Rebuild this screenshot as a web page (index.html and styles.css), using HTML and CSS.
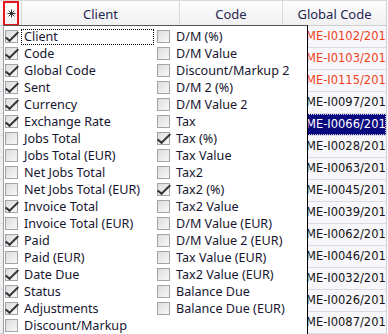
FILE: index.html
```html
<!DOCTYPE html>
<html>
<head>
    <title>Invoices grid - column chooser</title>
    <meta charset="utf-8" />
    <link rel="stylesheet" href="styles.css">
</head>
<body>
    <div class="grid">
        <div class="head">
            <div class="hcell sel">
                <span class="star">
                    <svg width="9" height="9" viewBox="0 0 9 9">
                        <path d="M4.5 0.5v8M0.5 4.5h8M1.7 1.7l5.6 5.6M7.3 1.7l-5.6 5.6" stroke="#333" stroke-width="1" fill="none"/>
                    </svg>
                </span>
            </div>
            <div class="hcell">Client</div>
            <div class="hcell">Code</div>
            <div class="hcell">Global Code</div>
        </div>
        <div class="row late"><div class="cell sel"></div><div class="cell"></div><div class="cell"></div><div class="cell code">ME-I0102/2017</div></div>
        <div class="row late"><div class="cell sel"></div><div class="cell"></div><div class="cell"></div><div class="cell code">ME-I0103/2017</div></div>
        <div class="row late"><div class="cell sel"></div><div class="cell"></div><div class="cell"></div><div class="cell code">ME-I0115/2017</div></div>
        <div class="row"><div class="cell sel"></div><div class="cell"></div><div class="cell"></div><div class="cell code">ME-I0097/2017</div></div>
        <div class="row current"><div class="cell sel"></div><div class="cell"></div><div class="cell"></div><div class="cell code">ME-I0066/2016</div></div>
        <div class="row"><div class="cell sel"></div><div class="cell"></div><div class="cell"></div><div class="cell code">ME-I0028/2017</div></div>
        <div class="row"><div class="cell sel"></div><div class="cell"></div><div class="cell"></div><div class="cell code">ME-I0063/2016</div></div>
        <div class="row"><div class="cell sel"></div><div class="cell"></div><div class="cell"></div><div class="cell code">ME-I0045/2016</div></div>
        <div class="row"><div class="cell sel"></div><div class="cell"></div><div class="cell"></div><div class="cell code">ME-I0039/2017</div></div>
        <div class="row"><div class="cell sel"></div><div class="cell"></div><div class="cell"></div><div class="cell code">ME-I0062/2016</div></div>
        <div class="row"><div class="cell sel"></div><div class="cell"></div><div class="cell"></div><div class="cell code">ME-I0046/2017</div></div>
        <div class="row"><div class="cell sel"></div><div class="cell"></div><div class="cell"></div><div class="cell code">ME-I0032/2017</div></div>
        <div class="row"><div class="cell sel"></div><div class="cell"></div><div class="cell"></div><div class="cell code">ME-I0026/2017</div></div>
        <div class="row"><div class="cell sel"></div><div class="cell"></div><div class="cell"></div><div class="cell code">ME-I0087/2017</div></div>
    </div>

    <div class="chooser">
        <div class="col">
            <div class="item on"><i class="box"></i><span class="label focus">Client</span></div>
            <div class="item on"><i class="box"></i><span class="label">Code</span></div>
            <div class="item on"><i class="box"></i><span class="label">Global Code</span></div>
            <div class="item on"><i class="box"></i><span class="label">Sent</span></div>
            <div class="item on"><i class="box"></i><span class="label">Currency</span></div>
            <div class="item on"><i class="box"></i><span class="label">Exchange Rate</span></div>
            <div class="item"><i class="box"></i><span class="label">Jobs Total</span></div>
            <div class="item"><i class="box"></i><span class="label">Jobs Total (EUR)</span></div>
            <div class="item"><i class="box"></i><span class="label">Net Jobs Total</span></div>
            <div class="item"><i class="box"></i><span class="label">Net Jobs Total (EUR)</span></div>
            <div class="item on"><i class="box"></i><span class="label">Invoice Total</span></div>
            <div class="item"><i class="box"></i><span class="label">Invoice Total (EUR)</span></div>
            <div class="item on"><i class="box"></i><span class="label">Paid</span></div>
            <div class="item"><i class="box"></i><span class="label">Paid (EUR)</span></div>
            <div class="item on"><i class="box"></i><span class="label">Date Due</span></div>
            <div class="item on"><i class="box"></i><span class="label">Status</span></div>
            <div class="item on"><i class="box"></i><span class="label">Adjustments</span></div>
            <div class="item"><i class="box"></i><span class="label">Discount/Markup</span></div>
        </div>
        <div class="col">
            <div class="item"><i class="box"></i><span class="label">D/M (%)</span></div>
            <div class="item"><i class="box"></i><span class="label">D/M Value</span></div>
            <div class="item"><i class="box"></i><span class="label">Discount/Markup 2</span></div>
            <div class="item"><i class="box"></i><span class="label">D/M 2 (%)</span></div>
            <div class="item"><i class="box"></i><span class="label">D/M Value 2</span></div>
            <div class="item"><i class="box"></i><span class="label">Tax</span></div>
            <div class="item on"><i class="box"></i><span class="label">Tax (%)</span></div>
            <div class="item"><i class="box"></i><span class="label">Tax Value</span></div>
            <div class="item"><i class="box"></i><span class="label">Tax2</span></div>
            <div class="item on"><i class="box"></i><span class="label">Tax2 (%)</span></div>
            <div class="item"><i class="box"></i><span class="label">Tax2 Value</span></div>
            <div class="item"><i class="box"></i><span class="label">D/M Value (EUR)</span></div>
            <div class="item"><i class="box"></i><span class="label">D/M Value 2 (EUR)</span></div>
            <div class="item"><i class="box"></i><span class="label">Tax Value (EUR)</span></div>
            <div class="item"><i class="box"></i><span class="label">Tax2 Value (EUR)</span></div>
            <div class="item"><i class="box"></i><span class="label">Balance Due</span></div>
            <div class="item"><i class="box"></i><span class="label">Balance Due (EUR)</span></div>
        </div>
    </div>
</body>
</html>
```

FILE: styles.css
```css
body {
    margin: 0px;
    background: #ffffff;
    font-family: "Noto Sans", "DejaVu Sans", sans-serif;
    overflow: hidden;
}

.grid {
    width: 386px;
    border-right: 1px solid #cfcfd6;
}

.head,
.row {
    display: grid;
    grid-template-columns: 22px 158px 103px 103px;
}

.head {
    height: 26px;
    background: linear-gradient(#fdfdfd, #f0f0f0);
    border-top: 1px solid #d8d8d8;
    border-bottom: 1px solid #cfcfcf;
    box-sizing: border-box;
}

.hcell {
    border-right: 1px solid #d8d8d8;
    font-size: 13px;
    color: #1f2550;
    display: flex;
    align-items: center;
    justify-content: center;
}

.hcell:last-child {
    border-right: none;
}

.hcell.sel {
    justify-content: flex-start;
}

.star {
    width: 12px;
    height: 21px;
    margin-left: 3px;
    border: 2px solid #e8141b;
    display: flex;
    align-items: center;
    justify-content: center;
}

.row {
    height: 22px;
    background: #f7f6fb;
    border-bottom: 1px solid #dcdbe4;
    box-sizing: border-box;
}

.cell {
    border-right: 1px solid #dcdbe4;
    overflow: hidden;
    white-space: nowrap;
}

.cell.sel {
    background: #efeff2;
}

.cell:last-child {
    border-right: none;
}

.code {
    font-family: "DejaVu Sans", sans-serif;
    font-size: 11.5px;
    line-height: 21px;
    padding-left: 23px;
    color: #141414;
}

.row.late .code {
    color: #f2421a;
}

.row.current .code {
    background: #0a0a80;
    color: #ffffff;
    outline: 1px dotted #c8c8e8;
    outline-offset: -1px;
}

/* column chooser dropped over the grid */
.chooser {
    position: absolute;
    left: 3px;
    top: 25px;
    width: 305px;
    height: 320px;
    background: #ffffff;
    border-left: 1px solid #a0a0a0;
    border-right: 1px solid #000000;
    border-top: 1px solid #555555;
    display: grid;
    grid-template-columns: 152px 1fr;
    padding-top: 2px;
    box-sizing: border-box;
}

.col {
    padding-left: 1px;
}

.item {
    height: 17px;
    display: flex;
    align-items: center;
    font-size: 12.6px;
    color: #161630;
}

.box {
    width: 13px;
    height: 13px;
    flex: none;
    box-sizing: border-box;
    border: 1px solid #a3a3a8;
    background: linear-gradient(135deg, #dcdcdc, #f8f8f8);
    position: relative;
}

.item.on .box::after {
    content: "";
    position: absolute;
    left: 3px;
    top: -2px;
    width: 4px;
    height: 11px;
    border-right: 2px solid #333338;
    border-bottom: 2px solid #333338;
    transform: rotate(38deg) skewX(-8deg);
}

.label {
    flex: 1;
    margin-left: 4px;
    margin-right: 3px;
    padding-left: 2px;
    line-height: 14px;
    white-space: nowrap;
}

.label.focus {
    outline: 1px dotted #000000;
}
```
